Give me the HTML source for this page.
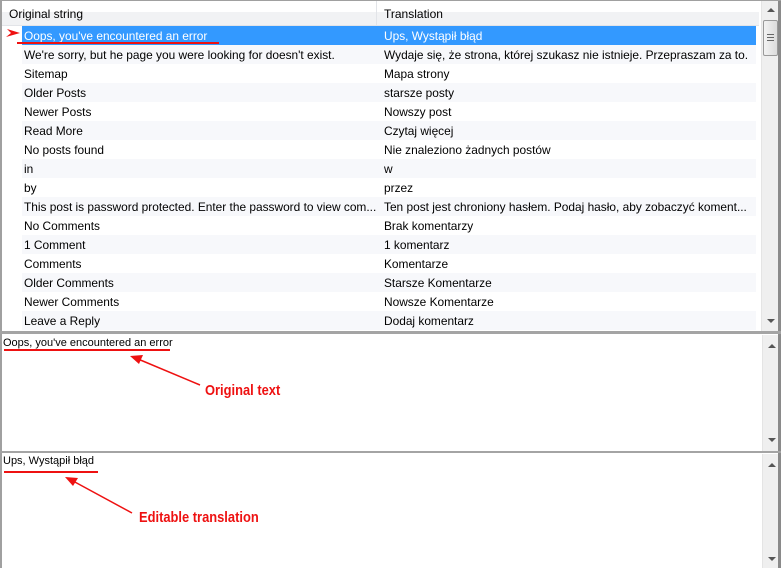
<!DOCTYPE html>
<html><head><meta charset="utf-8"><style>
*{margin:0;padding:0;box-sizing:border-box}
body{width:781px;height:568px;overflow:hidden;background:#fff;font-family:"Liberation Sans",sans-serif;font-size:12px;color:#000;position:relative}
.abs{position:absolute}
.hdr{left:2px;top:1px;width:757px;height:25px;background:linear-gradient(#fff 0,#fff 45%,#f1f2f4 46%,#f1f2f4 100%);border-bottom:1px solid #e2e4e8}
.hdr span{position:absolute;top:6px}
.row{position:absolute;left:22px;width:734px;height:19px;line-height:20px;white-space:nowrap;font-size:11.9px}
.row span{position:absolute;top:0}
.row .a{left:2px}.row .b{left:362px}
.alt{background:#f7f8fb}
.sel{background:#3399ff;color:#fff}
.sb{background:#efefef;border-left:1px solid #e4e4e4}
.tri{position:absolute;left:5px;width:0;height:0;border-left:4px solid transparent;border-right:4px solid transparent}
.up{border-bottom:4px solid #555}
.dn{border-top:4px solid #555}
.ann{color:#ee1111;font-weight:bold;font-size:15px;transform:scaleX(0.86);transform-origin:0 0;white-space:nowrap}
</style></head><body>
<div class="abs" style="left:0;top:0;width:2px;height:568px;background:#a0a0a0"></div>
<div class="abs" style="left:778px;top:0;width:3px;height:568px;background:#8a8a8a"></div>
<div class="abs" style="left:0;top:0;width:781px;height:1px;background:#a0a0a0"></div>
<div class="abs hdr"><span style="left:7px">Original string</span><span style="left:382px">Translation</span>
<div class="abs" style="left:374px;top:0;width:1px;height:24px;background:#e2e4e8"></div></div>

<div class="row sel" style="top:26px"><span class="a">Oops, you've encountered an error</span><span class="b">Ups, Wystąpił błąd</span></div>
<div class="row alt" style="top:45px"><span class="a">We're sorry, but he page you were looking for doesn't exist.</span><span class="b">Wydaje się, że strona, której szukasz nie istnieje. Przepraszam za to.</span></div>
<div class="row" style="top:64px"><span class="a">Sitemap</span><span class="b">Mapa strony</span></div>
<div class="row alt" style="top:83px"><span class="a">Older Posts</span><span class="b">starsze posty</span></div>
<div class="row" style="top:102px"><span class="a">Newer Posts</span><span class="b">Nowszy post</span></div>
<div class="row alt" style="top:121px"><span class="a">Read More</span><span class="b">Czytaj więcej</span></div>
<div class="row" style="top:140px"><span class="a">No posts found</span><span class="b">Nie znaleziono żadnych postów</span></div>
<div class="row alt" style="top:159px"><span class="a">in</span><span class="b">w</span></div>
<div class="row" style="top:178px"><span class="a">by</span><span class="b">przez</span></div>
<div class="row alt" style="top:197px"><span class="a">This post is password protected. Enter the password to view com...</span><span class="b">Ten post jest chroniony hasłem. Podaj hasło, aby zobaczyć koment...</span></div>
<div class="row" style="top:216px"><span class="a">No Comments</span><span class="b">Brak komentarzy</span></div>
<div class="row alt" style="top:235px"><span class="a">1 Comment</span><span class="b">1 komentarz</span></div>
<div class="row" style="top:254px"><span class="a">Comments</span><span class="b">Komentarze</span></div>
<div class="row alt" style="top:273px"><span class="a">Older Comments</span><span class="b">Starsze Komentarze</span></div>
<div class="row" style="top:292px"><span class="a">Newer Comments</span><span class="b">Nowsze Komentarze</span></div>
<div class="row alt" style="top:311px"><span class="a">Leave a Reply</span><span class="b">Dodaj komentarz</span></div>

<div class="abs sb" style="left:761px;top:1px;width:17px;height:330px">
<div class="tri up" style="top:7px"></div>
<div class="abs" style="left:1px;top:19px;width:15px;height:36px;background:linear-gradient(90deg,#f3f3f3,#dcdcdc);border:1px solid #9a9a9a;border-radius:2px"></div>
<div class="abs" style="left:5px;top:33px;width:7px;height:1px;background:#666"></div>
<div class="abs" style="left:5px;top:36px;width:7px;height:1px;background:#666"></div>
<div class="abs" style="left:5px;top:39px;width:7px;height:1px;background:#666"></div>
<div class="tri dn" style="top:318px"></div>
</div>

<div class="abs" style="left:0;top:331px;width:781px;height:3px;background:#a4a4a4"></div>
<div class="abs" style="left:3px;top:337px;font-size:11px">Oops, you've encountered an error</div>
<div class="abs sb" style="left:762px;top:335px;width:16px;height:116px"><div class="tri up" style="top:9px"></div><div class="tri dn" style="top:103px"></div></div>

<div class="abs" style="left:0;top:451px;width:781px;height:2px;background:#a4a4a4"></div>
<div class="abs" style="left:3px;top:455px;font-size:11px">Ups, Wystąpił błąd</div>
<div class="abs sb" style="left:762px;top:454px;width:16px;height:114px"><div class="tri up" style="top:9px"></div><div class="tri dn" style="top:103px"></div></div>

<svg class="abs" style="left:0;top:0" width="781" height="568">
<g stroke="#ee1111" fill="#ee1111">
<line x1="17" y1="43" x2="219" y2="43" stroke-width="2"/>
<polygon points="20,33 7,29 11,33 6,37" stroke="none"/>
<line x1="4" y1="350" x2="170" y2="350" stroke-width="2"/>
<line x1="200" y1="385" x2="138" y2="359" stroke-width="1.5"/>
<polygon points="130,356 143,355 139,364" stroke="none"/>
<line x1="4" y1="472" x2="98" y2="472" stroke-width="2"/>
<line x1="132" y1="513" x2="73" y2="481" stroke-width="1.5"/>
<polygon points="65,477 78,478 73,486" stroke="none"/>
</g>
</svg>
<div class="abs ann" style="left:205px;top:382px">Original text</div>
<div class="abs ann" style="left:139px;top:509px">Editable translation</div>
</body></html>
